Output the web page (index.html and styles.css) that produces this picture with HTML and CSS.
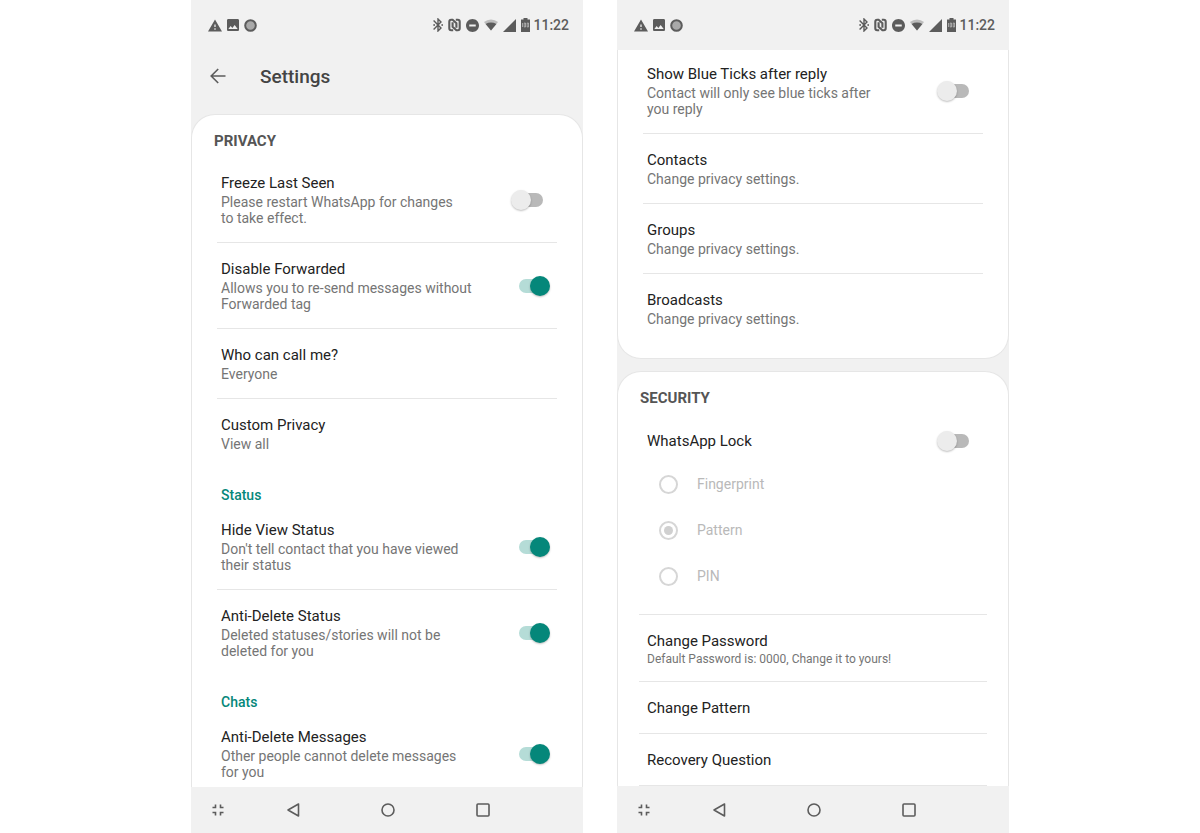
FILE: index.html
```
<!doctype html>

<html lang="en">
<head>
  <meta charset="utf-8">
  <meta name="viewport" content="width=device-width, initial-scale=1">

  <title>Settings</title>
  <link rel="stylesheet" href="styles.css">
</head>

<body>
  <!-- shared icons -->
  <svg class="sprite" aria-hidden="true">
    <symbol id="warning" viewBox="1 2 22 19"><path d="M1 21h22L12 2 1 21zm12-3h-2v-2h2v2zm0-4h-2v-4h2v4z"/></symbol>
    <symbol id="image" viewBox="3 3 18 18"><path d="M21 19V5c0-1.100-.9-2-2-2H5c-1.100 0-2 .9-2 2v14c0 1.100.9 2 2 2h14c1.100 0 2-.9 2-2zM8.500 13.500l2.500 3 3.500-4.500 4.500 6H5l3.500-4.500z"/></symbol>
    <symbol id="record" viewBox="0 0 13 13"><circle cx="6.500" cy="6.500" r="5.300" fill="#a9a9a9" stroke="currentColor" stroke-width="2"/></symbol>
    <symbol id="bluetooth" viewBox="5 2 14 20"><path d="M17.710 7.710L12 2h-1v7.590L6.410 5 5 6.410 10.590 12 5 17.590 6.410 19 11 14.410V22h1l5.710-5.710-4.300-4.290 4.300-4.290zM13 5.830l1.880 1.880L13 9.590V5.830zm1.880 10.460L13 18.170v-3.760l1.880 1.880z"/><circle cx="6.500" cy="12" r="1.300"/><circle cx="18" cy="12" r="1.300"/></symbol>
    <symbol id="nfc" viewBox="0 0 13 14"><path d="M5.200 12.200H3.200q-1.900 0-1.900-1.900V3.700q0-1.900 1.900-1.900h1.400L8.400 5.200v4.600M7.800 1.800h2q1.900 0 1.900 1.900v6.600q0 1.900-1.900 1.900H8.400L4.600 8.800V4.200" fill="none" stroke="currentColor" stroke-width="2.100"/></symbol>
    <symbol id="dnd" viewBox="2 2 20 20"><path d="M12 2C6.480 2 2 6.480 2 12s4.480 10 10 10 10-4.480 10-10S17.520 2 12 2zm5 11.500H7v-3h10v3z"/></symbol>
    <symbol id="wifi" viewBox="0 0 14 12"><path d="M7 11.500L0 3Q3 .5 7 .5T14 3z" opacity=".35"/><path d="M7 11.500L1.600 5Q4.200 3.600 7 3.600t5.400 1.400z"/></symbol>
    <symbol id="signal" viewBox="0 0 13 13"><path d="M0 13L13 0v13z"/></symbol>
    <symbol id="battery" viewBox="0 0 9 14"><path d="M2.500 0h4v1.400H9V14H0V1.400h2.500z"/><path d="M1.500 5v4M3.200 5h1.300v4H3.200zM6.200 5h1.300v4H6.200z" fill="none" stroke="#d5d5d5" stroke-width=".6"/></symbol>
    <symbol id="shrink" viewBox="0 0 12 12"><path d="M3.500 .5v3H.5M8.500 .5v3h3M3.500 11.500v-3H.5M8.500 11.500v-3h3" fill="none" stroke="currentColor" stroke-width="1.600"/></symbol>
    <symbol id="back" viewBox="0 0 14 16"><path d="M12.500 2v12L2 8z" fill="none" stroke="currentColor" stroke-width="1.600" stroke-linejoin="round"/></symbol>
    <symbol id="home" viewBox="0 0 14 14"><circle cx="7" cy="7" r="6" fill="none" stroke="currentColor" stroke-width="1.600"/></symbol>
    <symbol id="recent" viewBox="0 0 14 14"><rect x="1" y="1" width="12" height="12" rx="1" fill="none" stroke="currentColor" stroke-width="1.600"/></symbol>
    <symbol id="arrow" viewBox="0 0 16 16"><path d="M15.500 8H1.500M8.200 1L1.200 8l7 7" fill="none" stroke="currentColor" stroke-width="1.600"/></symbol>
  </svg>

  <main class="screens">

    <section class="phone">
      <div class="statusbar">
        <svg width="14" height="13"><use href="#warning"/></svg>
        <svg width="12" height="12"><use href="#image"/></svg>
        <svg width="13" height="13"><use href="#record"/></svg>
        <div class="status-right">
          <svg width="10" height="14"><use href="#bluetooth"/></svg>
          <svg width="13" height="14"><use href="#nfc"/></svg>
          <svg width="13" height="13"><use href="#dnd"/></svg>
          <svg width="14" height="12"><use href="#wifi"/></svg>
          <svg width="13" height="13"><use href="#signal"/></svg>
          <div class="clock"><svg width="9" height="14"><use href="#battery"/></svg><span>11:22</span></div>
        </div>
      </div>
      <header class="appbar">
        <button class="icon-btn" aria-label="Back"><svg width="16" height="16"><use href="#arrow"/></svg></button>
        <h1>Settings</h1>
      </header>
      <div class="content">
        <div class="card card-top">
          <h2>PRIVACY</h2>
          <label class="row">
            <span class="text"><span class="title">Freeze Last Seen</span><span class="sub">Please restart WhatsApp for changes<br>to take effect.</span></span>
            <input type="checkbox" class="switch">
          </label>
          <label class="row">
            <span class="text"><span class="title">Disable Forwarded</span><span class="sub">Allows you to re-send messages without<br>Forwarded tag</span></span>
            <input type="checkbox" class="switch" checked>
          </label>
          <button class="row">
            <span class="text"><span class="title">Who can call me?</span><span class="sub">Everyone</span></span>
          </button>
          <button class="row last">
            <span class="text"><span class="title">Custom Privacy</span><span class="sub">View all</span></span>
          </button>
          <h3>Status</h3>
          <label class="row">
            <span class="text"><span class="title">Hide View Status</span><span class="sub">Don't tell contact that you have viewed<br>their status</span></span>
            <input type="checkbox" class="switch" checked>
          </label>
          <label class="row last">
            <span class="text"><span class="title">Anti-Delete Status</span><span class="sub">Deleted statuses/stories will not be<br>deleted for you</span></span>
            <input type="checkbox" class="switch" checked>
          </label>
          <h3>Chats</h3>
          <label class="row last">
            <span class="text"><span class="title">Anti-Delete Messages</span><span class="sub">Other people cannot delete messages<br>for you</span></span>
            <input type="checkbox" class="switch" checked>
          </label>
        </div>
      </div>
      <nav class="navbar">
        <button class="icon-btn" aria-label="Exit full screen"><svg width="12" height="12"><use href="#shrink"/></svg></button>
        <button class="icon-btn" aria-label="Back"><svg width="14" height="16"><use href="#back"/></svg></button>
        <button class="icon-btn" aria-label="Home"><svg width="14" height="14"><use href="#home"/></svg></button>
        <button class="icon-btn" aria-label="Recent apps"><svg width="14" height="14"><use href="#recent"/></svg></button>
      </nav>
    </section>

    <section class="phone">
      <div class="statusbar">
        <svg width="14" height="13"><use href="#warning"/></svg>
        <svg width="12" height="12"><use href="#image"/></svg>
        <svg width="13" height="13"><use href="#record"/></svg>
        <div class="status-right">
          <svg width="10" height="14"><use href="#bluetooth"/></svg>
          <svg width="13" height="14"><use href="#nfc"/></svg>
          <svg width="13" height="13"><use href="#dnd"/></svg>
          <svg width="14" height="12"><use href="#wifi"/></svg>
          <svg width="13" height="13"><use href="#signal"/></svg>
          <div class="clock"><svg width="9" height="14"><use href="#battery"/></svg><span>11:22</span></div>
        </div>
      </div>
      <div class="content">
        <div class="card card-bottom">
          <label class="row">
            <span class="text"><span class="title">Show Blue Ticks after reply</span><span class="sub">Contact will only see blue ticks after<br>you reply</span></span>
            <input type="checkbox" class="switch">
          </label>
          <button class="row">
            <span class="text"><span class="title">Contacts</span><span class="sub">Change privacy settings.</span></span>
          </button>
          <button class="row">
            <span class="text"><span class="title">Groups</span><span class="sub">Change privacy settings.</span></span>
          </button>
          <button class="row last">
            <span class="text"><span class="title">Broadcasts</span><span class="sub">Change privacy settings.</span></span>
          </button>
        </div>
        <div class="card card-top security">
          <h2>SECURITY</h2>
          <label class="row last">
            <span class="text"><span class="title">WhatsApp Lock</span></span>
            <input type="checkbox" class="switch">
          </label>
          <fieldset class="lock-types" disabled>
            <label><input type="radio" name="lock">Fingerprint</label>
            <label><input type="radio" name="lock" checked>Pattern</label>
            <label><input type="radio" name="lock">PIN</label>
          </fieldset>
          <button class="row">
            <span class="text"><span class="title">Change Password</span><span class="sub small">Default Password is: 0000, Change it to yours!</span></span>
          </button>
          <button class="row">
            <span class="text"><span class="title">Change Pattern</span></span>
          </button>
          <button class="row">
            <span class="text"><span class="title">Recovery Question</span></span>
          </button>
        </div>
      </div>
      <nav class="navbar">
        <button class="icon-btn" aria-label="Exit full screen"><svg width="12" height="12"><use href="#shrink"/></svg></button>
        <button class="icon-btn" aria-label="Back"><svg width="14" height="16"><use href="#back"/></svg></button>
        <button class="icon-btn" aria-label="Home"><svg width="14" height="14"><use href="#home"/></svg></button>
        <button class="icon-btn" aria-label="Recent apps"><svg width="14" height="14"><use href="#recent"/></svg></button>
      </nav>
    </section>

  </main>
</body>
</html>
```

FILE: styles.css
```
:root{
  --accent:#05877a;
  --chrome:#f1f1f1; /*status bar, app bar and nav bar*/
  --icon:#5c5c5c;
  --line:#e6e6e6;
}
*{
  box-sizing: border-box;
}
body{
  margin: 0;
  background: #fff;
  color: #222;
  font-family: Roboto, "Liberation Sans", sans-serif;
  font-size: 14px;
}
button{
  border: 0;
  padding: 0;
  background: none;
  color: inherit;
  font: inherit;
  text-align: left;
  cursor: pointer;
}
svg{
  display: block;
  fill: currentColor;
}
.sprite{
  display: none;
}
.screens{
  display: grid;
  grid-template-columns: 1fr 1fr;
  gap: 34px;
  max-width: 818px;
  margin: 0 auto;
}
.phone{
  display: flex;
  flex-direction: column;
  height: 100vh;
  background: var(--chrome);
}

/* bars */
.statusbar{
  display: flex;
  flex: none;
  align-items: center;
  gap: 5px;
  height: 50px;
  padding: 0 14px 0 17px;
  color: var(--icon);
}
.status-right{
  display: flex;
  align-items: center;
  gap: 5px;
  margin-left: auto;
}
.clock{
  display: flex;
  align-items: center;
  gap: 3px;
  font-weight: 500;
}
.appbar{
  display: flex;
  flex: none;
  align-items: center;
  gap: 34px;
  height: 64px;
  padding: 0 19px 12px;
  color: #444;
}
.appbar h1{
  margin: 0;
  font-size: 19px;
  font-weight: 500;
}
.icon-btn{
  display: flex;
  align-items: center;
  justify-content: center;
  color: var(--icon);
}
.navbar{
  display: grid;
  flex: none;
  grid-template-columns: 54fr 96fr 94fr 96fr 52fr;
  height: 46px;
}

/* settings list */
.content{
  flex: 1;
  min-height: 0;
  overflow-y: auto;
  scrollbar-width: none;
}
.card{
  border: 1px solid var(--line);
  background: #fff;
}
.card-top{
  border-bottom: 0;
  border-radius: 24px 24px 0 0;
}
.card-bottom{
  margin-bottom: 12px;
  padding-bottom: 15px;
  border-top: 0;
  border-radius: 0 0 24px 24px;
}
h2{
  margin: 0;
  padding: 14px 22px 4px;
  color: #555;
  font-size: 15px;
  font-weight: 700;
  line-height: 24px;
}
h3{
  margin: 18px 29px 0;
  color: var(--accent);
  font-size: 14px;
  font-weight: 500;
  line-height: 18px;
}
.row{
  display: flex;
  align-items: center;
  justify-content: space-between;
  width: calc(100% - 50px);
  margin: 0 25px;
  padding: 16px 7px 16px 4px;
  border-bottom: 1px solid var(--line);
}
.row.last{
  border-bottom: 0;
}
.card-bottom .row:first-child{
  padding-top: 14px;
}
.security .row{
  width: calc(100% - 42px);
  margin: 0 21px;
  padding: 16px 11px 15px 8px;
}
.security .row.last{
  padding-top: 17px;
  padding-bottom: 10px;
}
.title, .sub{
  display: block;
}
.title{
  font-size: 15px;
  line-height: 20px;
}
.sub{
  margin-top: 1px;
  color: #757575;
  line-height: 16px;
}
.sub.small{
  font-size: 12px;
  line-height: 14px;
}

/* switch: 24px track, the thumb hangs over either end */
.switch{
  appearance: none;
  position: relative;
  flex: none;
  width: 39px;
  height: 20px;
  margin: 0;
}
.switch::before{
  content: "";
  position: absolute;
  top: 3px;
  left: 8px;
  width: 24px;
  height: 14px;
  border-radius: 7px;
  background: #b9b9b9;
}
.switch::after{
  content: "";
  position: absolute;
  top: 0;
  left: 0;
  width: 20px;
  height: 20px;
  border-radius: 50%;
  background: #ececec;
  box-shadow: 0 1px 2px rgba(0,0,0,.25);
}
.switch:checked::before{
  background: #b5dcd7;
}
.switch:checked::after{
  left: 19px;
  background: var(--accent);
}

/* lock type */
.lock-types{
  margin: 0 21px;
  padding: 0 0 15px 20px;
  border: 0;
  border-bottom: 1px solid var(--line);
}
.lock-types label{
  display: flex;
  align-items: center;
  gap: 19px;
  height: 46px;
  color: #b9b9b9;
}
.lock-types input{
  appearance: none;
  width: 19px;
  height: 19px;
  margin: 0;
  border: 2px solid #d6d6d6;
  border-radius: 50%;
}
.lock-types input:checked{
  padding: 3px;
  background: #d0d0d0 content-box;
}

@media (max-width: 700px){
  .screens{
    grid-template-columns: 1fr;
  }
}
```
